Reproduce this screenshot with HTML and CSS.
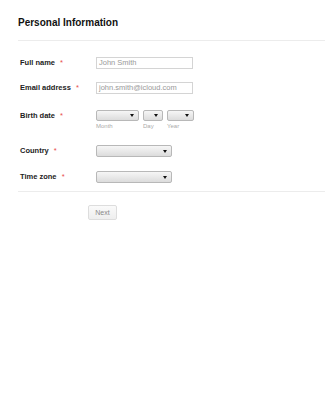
FILE: index.html
```html
<!DOCTYPE html>
<html lang="en">
<head>
  <meta charset="UTF-8">
  <title>Personal Information</title>
  <link rel="stylesheet" href="styles.css">
</head>
<body>
  <div class="form">
    <h2 class="title">Personal Information</h2>

    <div class="fields">
      <div class="row">
        <label class="label">Full name <span class="req">*</span></label>
        <div class="text-input">John Smith</div>
      </div>

      <div class="row">
        <label class="label">Email address <span class="req">*</span></label>
        <div class="text-input">john.smith@icloud.com</div>
      </div>

      <div class="row row-date">
        <label class="label">Birth date <span class="req">*</span></label>
        <div class="date-group">
          <div class="date-part">
            <div class="select month"></div>
            <span class="sub">Month</span>
          </div>
          <div class="date-part">
            <div class="select day"></div>
            <span class="sub">Day</span>
          </div>
          <div class="date-part">
            <div class="select year"></div>
            <span class="sub">Year</span>
          </div>
        </div>
      </div>

      <div class="row row-select">
        <label class="label">Country <span class="req">*</span></label>
        <div class="select wide"></div>
      </div>

      <div class="row row-select">
        <label class="label">Time zone <span class="req">*</span></label>
        <div class="select wide"></div>
      </div>
    </div>

    <div class="actions">
      <button class="btn">Next</button>
    </div>
  </div>
</body>
</html>
```

FILE: styles.css
```css
body {
  margin: 0;
  font-family: "Liberation Sans", Arial, sans-serif;
  background: #fff;
  color: #222;
}
.form {
  padding-left: 18px;
}
.title {
  margin: 0;
  padding-top: 17px;
  padding-bottom: 11px;
  font-size: 10px;
  line-height: 12px;
  font-weight: bold;
  color: #111;
  border-bottom: 1px solid #ececec;
}
.fields {
  padding-top: 10px;
  border-bottom: 1px solid #ececec;
}
.row {
  display: flex;
  align-items: flex-start;
  padding: 6px 0 7px;
}
.label {
  width: 78px;
  padding-left: 2px;
  box-sizing: border-box;
  font-size: 7.5px;
  line-height: 12px;
  font-weight: bold;
  color: #222;
}
.req {
  color: #e84c4c;
  margin-left: 3px;
  font-weight: normal;
}
.text-input {
  width: 97px;
  height: 12px;
  box-sizing: border-box;
  border: 1px solid #d4d4d4;
  padding-left: 2px;
  font-size: 7.5px;
  line-height: 10px;
  color: #999;
}
.row-date {
  padding: 9px 0 8px;
}
.row-date .label {
  line-height: 11px;
}
.row-select {
  padding: 6px 0 8px;
}
.date-group {
  display: flex;
  gap: 4px;
}
.date-part {
  display: flex;
  flex-direction: column;
}
.select {
  position: relative;
  height: 11px;
  box-sizing: border-box;
  border: 1px solid #b8b8b8;
  border-radius: 2px;
  background: linear-gradient(#f6f6f6, #dcdcdc);
}
.select::after {
  content: "";
  position: absolute;
  right: 4px;
  top: 3px;
  border-left: 2px solid transparent;
  border-right: 2px solid transparent;
  border-top: 3px solid #111;
}
.month { width: 43px; }
.day { width: 20px; }
.year { width: 27px; }
.wide {
  width: 76px;
  height: 12px;
}
.wide::after {
  top: 4px;
}
.sub {
  font-size: 6px;
  line-height: 10px;
  color: #aaa;
}
.actions {
  padding: 9px 0 0 70px;
}
.btn {
  width: 29px;
  height: 15px;
  padding: 0;
  border: 1px solid #ddd;
  border-radius: 2px;
  background: linear-gradient(#fafafa, #eeeeee);
  font-family: "Liberation Sans", Arial, sans-serif;
  font-size: 7px;
  color: #888;
}
```
